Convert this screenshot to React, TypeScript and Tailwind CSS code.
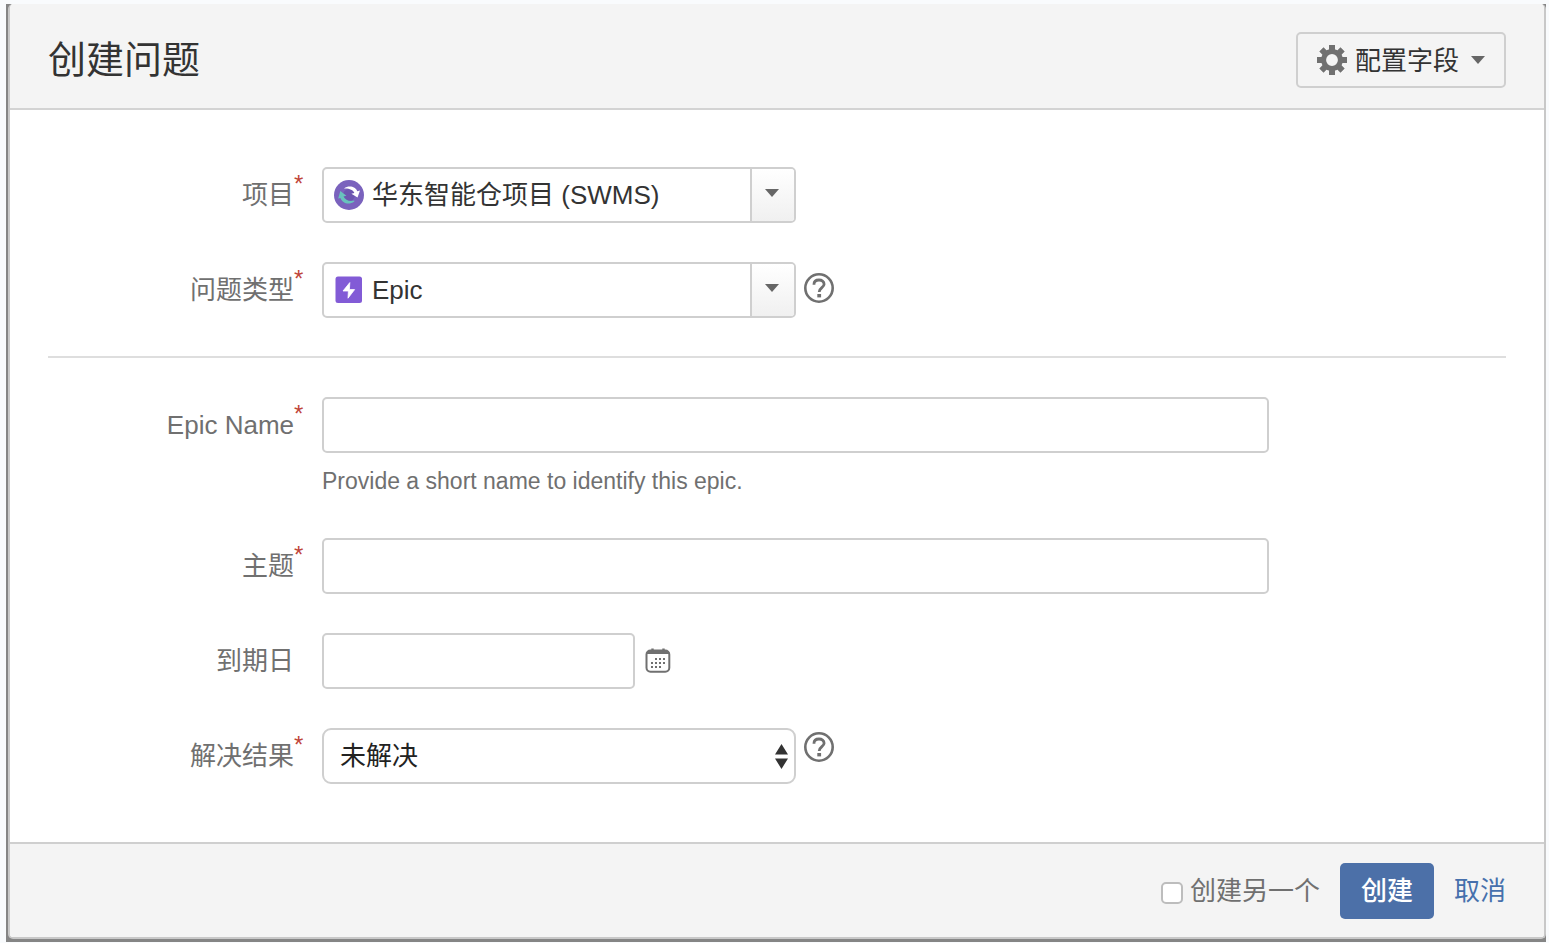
import React, { useState } from 'react';

interface FieldRowProps {
  id: string;
  label: string;
  required?: boolean;
  hint?: string;
  children: React.ReactNode;
}

const inputClass =
  'h-14 rounded-[5px] border-2 border-[#cfcfcf] bg-white px-4 text-[26px] text-[#333] outline-none focus:border-[#4b6fa8]';

function FieldRow({ id, label, required, hint, children }: FieldRowProps) {
  return (
    <div className="flex gap-[18px]">
      <label htmlFor={id} className="flex h-14 w-64 shrink-0 items-center justify-end text-[#707070]">
        {label}
        <span className="h-[42px] w-[10px] text-[24px] leading-5 text-[#c0453a]">{required && '*'}</span>
      </label>
      <div className="min-w-0 flex-1">
        <div className="flex">{children}</div>
        {hint && <p className="mt-3 text-[23px] leading-8 text-[#707070]">{hint}</p>}
      </div>
    </div>
  );
}

interface PickerProps {
  id: string;
  icon: React.ReactNode;
  options: string[];
}

// Select with a leading icon and a separate arrow box
function Picker({ id, icon, options }: PickerProps) {
  const [value, setValue] = useState<string>(options[0]);

  return (
    <div className="relative w-2/5">
      <select
        id={id}
        value={value}
        onChange={(event) => setValue(event.target.value)}
        className="h-14 w-full appearance-none rounded-[5px] border-2 border-[#cfcfcf] bg-white pl-12 pr-12 text-[26px] text-[#333] outline-none"
      >
        {options.map((option) => (
          <option key={option}>{option}</option>
        ))}
      </select>
      <span className="pointer-events-none absolute inset-y-0 left-3 flex items-center">{icon}</span>
      <span className="pointer-events-none absolute inset-y-[2px] right-[2px] flex w-11 items-center justify-center rounded-r-[3px] border-l-2 border-[#cfcfcf] bg-linear-to-b from-white to-[#f0f0f0] pb-1 pr-[2px]">
        <CaretIcon />
      </span>
    </div>
  );
}

function CaretIcon() {
  return (
    <svg width="14" height="8" viewBox="0 0 14 8" fill="#666">
      <path d="M0 0h14L7 8z" />
    </svg>
  );
}

function GearIcon() {
  return (
    <svg width="30" height="30" viewBox="0 0 30 30" fill="none" stroke="#707070">
      <circle cx="15" cy="15" r="8.4" strokeWidth="5" />
      <path
        d="M15 0v6M15 24v6M0 15h6M24 15h6M4.4 4.4l4.2 4.2M21.4 21.4l4.2 4.2M4.4 25.6l4.2-4.2M21.4 8.6l4.2-4.2"
        strokeWidth="6"
      />
    </svg>
  );
}

function ProjectIcon() {
  return (
    <svg width="30" height="30" viewBox="0 0 30 30">
      <circle cx="15" cy="15" r="15" fill="#7a62bd" />
      <circle cx="15" cy="15" r="6" fill="#6c55b0" />
      <path d="M10 8.6C15 4.6 21.8 7 23.3 11.2L26 10.6 23.5 17.4 17.4 13.8 20.4 12.9C19 9.9 14.5 8 10 8.6z" fill="#fff" />
      <path d="M20.3 21.5C15 25.4 8.4 23.4 6.4 18L4.2 18.4 6.3 11 12.4 15.7 9.5 16.5C11 20 15.6 22 20.3 20.6z" fill="#68c2bd" />
    </svg>
  );
}

function EpicIcon() {
  return (
    <svg width="28" height="28" viewBox="0 0 28 28" className="ml-px">
      <rect x="0.5" y="0.5" width="26.5" height="26.5" rx="2.5" fill="#825bd6" />
      <path d="M14.8 6.6L8 15h5.4l-.4 7.2L19.6 13.6h-5.2z" fill="#fff" stroke="#fff" strokeWidth="0.8" strokeLinejoin="round" />
    </svg>
  );
}

function HelpButton() {
  return (
    <button type="button" aria-label="帮助" className="ml-2 h-[30px] w-[30px] shrink-0">
      <svg width="30" height="30" viewBox="0 0 30 30" fill="none" stroke="#707070">
        <circle cx="15" cy="15" r="13.7" strokeWidth="2.6" />
        <path d="M10 11.8V11.2C10 8.4 12.2 7 15 7s5.1 1.5 5.1 4.3c0 3.3-4.9 3.6-4.9 7.7" strokeWidth="2.8" />
        <path d="M13.3 22.7h3.8" strokeWidth="3.4" />
      </svg>
    </button>
  );
}

function CalendarIcon() {
  return (
    <svg width="26" height="26" viewBox="0 0 26 26" fill="none" stroke="#707070">
      <rect x="1.5" y="2.6" width="22.8" height="21.2" rx="4" strokeWidth="2" />
      <path d="M2 4.5h22" strokeWidth="3" />
      <path d="M7.5 0.5v3M18.5 0.5v3" strokeWidth="2.4" />
      <path d="M10 11h10M6 15h14M6 19h10" strokeWidth="2" strokeDasharray="2 2" />
    </svg>
  );
}

function App() {
  const [createAnother, setCreateAnother] = useState(false);

  return (
    <div className="bg-[#f9fbfd] pb-px pl-[6px] pr-[3px] pt-1 font-['Liberation_Sans','Noto_Sans_CJK_SC',sans-serif] text-[26px] leading-9">
      <div className="bg-[#858585] pb-[3px] pl-[2px]">
        <form
          className="overflow-hidden rounded-[5px] border-2 border-t-0 border-[#c8c8c8] bg-white"
          onSubmit={(event) => event.preventDefault()}
        >
          <header className="flex h-[106px] items-center justify-between border-b-2 border-[#d3d3d3] bg-[#f4f4f4] px-[38px] pt-2">
            <h2 className="text-[38px] leading-[48px] text-[#333]">创建问题</h2>
            <button
              type="button"
              className="flex h-14 items-center rounded-[5px] border-2 border-[#cfcfcf] px-[19px] text-[#333]"
            >
              <GearIcon />
              <span className="ml-2 mr-3 pt-[2px]">配置字段</span>
              <CaretIcon />
            </button>
          </header>

          <main className="px-[38px] pb-[58px] pt-[57px]">
            <div className="flex flex-col gap-[39px]">
              <FieldRow id="project" label="项目" required>
                <Picker id="project" icon={<ProjectIcon />} options={['华东智能仓项目 (SWMS)']} />
              </FieldRow>
              <FieldRow id="issue-type" label="问题类型" required>
                <Picker id="issue-type" icon={<EpicIcon />} options={['Epic']} />
                <div className="pt-[11px]">
                  <HelpButton />
                </div>
              </FieldRow>
            </div>

            <hr className="mb-[39px] mt-[38px] border-t-2 border-[#dedede]" />

            <FieldRow id="epic-name" label="Epic Name" required hint="Provide a short name to identify this epic.">
              <input id="epic-name" type="text" className={`${inputClass} w-4/5`} />
            </FieldRow>
            <div className="mt-[41px] flex flex-col gap-[39px]">
              <FieldRow id="summary" label="主题" required>
                <input id="summary" type="text" className={`${inputClass} w-4/5`} />
              </FieldRow>
              <FieldRow id="due-date" label="到期日">
                <input id="due-date" type="text" className={`${inputClass} w-[313px]`} />
                <button type="button" aria-label="选择日期" className="ml-[10px]">
                  <CalendarIcon />
                </button>
              </FieldRow>
              <FieldRow id="resolution" label="解决结果" required>
                <div className="relative w-2/5">
                  <select
                    id="resolution"
                    className="h-14 w-full appearance-none rounded-[9px] border-2 border-[#cfcfcf] bg-white pl-4 pr-10 text-[26px] text-[#222] outline-none"
                  >
                    <option>未解决</option>
                  </select>
                  <span className="pointer-events-none absolute inset-y-0 right-2 flex items-center">
                    <svg width="13" height="25" viewBox="0 0 13 25" fill="#333">
                      <path d="M6.5 0L13 10.5H0zM0 14.5h13L6.5 25z" />
                    </svg>
                  </span>
                </div>
                <div className="pt-1">
                  <HelpButton />
                </div>
              </FieldRow>
            </div>
          </main>

          <footer className="flex h-[95px] items-center justify-end border-t-2 border-[#cfcfcf] bg-[#f4f4f4] pr-[38px]">
            <label className="flex items-center text-[#707070]">
              <input
                type="checkbox"
                checked={createAnother}
                onChange={(event) => setCreateAnother(event.target.checked)}
                className="mr-[7px] mt-1 h-[22px] w-[22px] appearance-none rounded-[5px] border-2 border-[#bdbdbd] bg-white checked:bg-[#4b6fa8]"
              />
              创建另一个
            </label>
            <button type="submit" className="ml-5 h-14 rounded-[5px] bg-[#4c70a8] px-[21px] font-medium text-white">
              创建
            </button>
            <a href="#cancel" className="ml-5 text-[#4670ac]">
              取消
            </a>
          </footer>
        </form>
      </div>
    </div>
  );
}

export default App;
